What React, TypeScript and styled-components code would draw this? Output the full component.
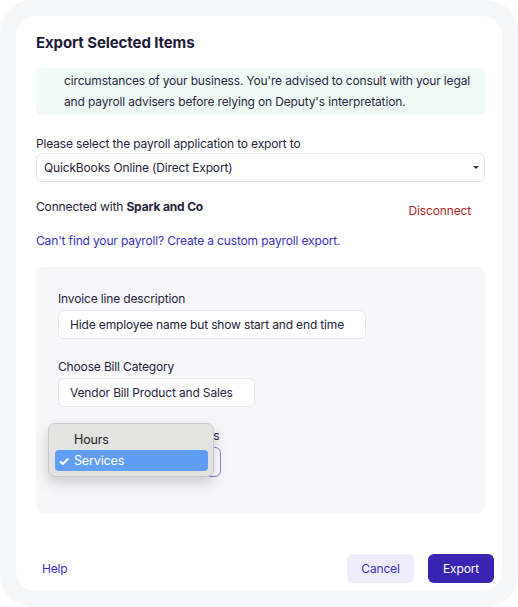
import React from "react";
import styled, { createGlobalStyle } from "styled-components";

const Global = createGlobalStyle`
  html, body { margin: 0; padding: 0; background: #ffffff; }
  body { font-family: Inter, "Noto Sans", sans-serif; letter-spacing: -0.15px; -webkit-font-smoothing: antialiased; }
  * { box-sizing: border-box; }
`;

const Frame = styled.div`
  width: 518px;
  height: 607px;
  background: #f6f7f9;
  border-radius: 32px;
  padding: 16px;
`;

const Card = styled.div`
  height: 575px;
  background: #ffffff;
  border-radius: 20px;
  display: flex;
  flex-direction: column;
  padding: 15px 17px 0 20px;
  color: #26233a;
`;

const Title = styled.h2`
  margin: 0;
  font-size: 15px;
  line-height: 24px;
  font-weight: 700;
  letter-spacing: -0.1px;
  color: #1e1a38;
`;

const Notice = styled.div`
  margin-top: 13px;
  background: #f0faf7;
  border-radius: 6px;
  padding: 2px 10px 3px 28px;
  font-size: 12px;
  line-height: 21px;
  color: #2a2740;
`;

const FieldLabel = styled.div<{ $top?: number }>`
  margin-top: ${(p) => p.$top ?? 0}px;
  font-size: 12px;
  line-height: 18px;
  color: #26233a;
  white-space: nowrap;
`;

const Select = styled.div`
  height: 29px;
  border: 1px solid #e4e4ea;
  border-radius: 6px;
  display: flex;
  align-items: center;
  justify-content: space-between;
  padding: 0 5px 0 7px;
  font-size: 12px;
  color: #26233a;
`;

const Caret = styled.span`
  width: 0;
  height: 0;
  border-left: 3px solid transparent;
  border-right: 3px solid transparent;
  border-top: 3px solid #333;
`;

const ConnectedRow = styled.div`
  margin-top: 16px;
  display: flex;
  justify-content: space-between;
  align-items: flex-start;
  font-size: 12px;
  line-height: 18px;
`;

const Disconnect = styled.span`
  color: #b1271d;
  padding: 4px 14px 0 0;
`;

const LinkText = styled.div`
  margin-top: 12px;
  font-size: 12px;
  line-height: 18px;
  color: #3a2fbf;
`;

const Panel = styled.div`
  margin-top: 17px;
  height: 246px;
  background: #f7f7fa;
  border-radius: 8px;
  padding: 23px 22px 0 22px;
  display: flex;
  flex-direction: column;
`;

const Group = styled.div<{ $top?: number }>`
  position: relative;
  margin-top: ${(p) => p.$top ?? 0}px;
  display: flex;
  flex-direction: column;
  gap: 2px;
`;

const TextBox = styled.div<{ $w: number; $focus?: boolean; $h?: number }>`
  width: ${(p) => p.$w}px;
  height: ${(p) => p.$h ?? 29}px;
  background: #ffffff;
  border: 1px solid ${(p) => (p.$focus ? "#8b7fe0" : "#e6e6ee")};
  border-radius: 6px;
  display: flex;
  align-items: center;
  padding-left: 11px;
  font-size: 12px;
  white-space: nowrap;
  color: #26233a;
`;

const Menu = styled.div`
  position: absolute;
  left: -10px;
  top: -4px;
  width: 166px;
  padding: 5px 5px 5px 6px;
  background: #e3e3e2;
  border: 1px solid #c9c9c9;
  border-radius: 7px;
  box-shadow: 0 6px 14px rgba(0, 0, 0, 0.18);
  display: flex;
  flex-direction: column;
`;

const MenuItem = styled.div<{ $selected?: boolean }>`
  height: 21px;
  display: flex;
  align-items: center;
  border-radius: 4px;
  font-size: 12.5px;
  padding-left: 3px;
  background: ${(p) => (p.$selected ? "#609ef6" : "transparent")};
  color: ${(p) => (p.$selected ? "#ffffff" : "#222")};
`;

const Check = styled.span`
  width: 16px;
  font-size: 13px;
  font-weight: 700;
`;

const Spacer = styled.div`
  flex: 1;
`;

const Footer = styled.div`
  display: flex;
  align-items: center;
  margin: 0 -9px 8px 6px;
  gap: 14px;
`;

const HelpLink = styled.span`
  font-size: 12px;
  color: #3a2fbf;
  margin-right: auto;
`;

const Button = styled.button<{ $primary?: boolean }>`
  height: 29px;
  border: none;
  border-radius: 6px;
  font-family: inherit;
  letter-spacing: -0.15px;
  font-size: 12px;
  padding: 0;
  width: ${(p) => (p.$primary ? 66 : 67)}px;
  background: ${(p) => (p.$primary ? "#3a25b3" : "#efedfa")};
  color: ${(p) => (p.$primary ? "#ffffff" : "#3a2fbf")};
`;

export default function App() {
  return (
    <>
      <Global />
      <Frame>
        <Card>
          <Title>Export Selected Items</Title>
          <Notice>
            circumstances of your business. You're advised to consult with your legal
            <br />
            and payroll advisers before relying on Deputy's interpretation.
          </Notice>
          <FieldLabel $top={20}>Please select the payroll application to export to</FieldLabel>
          <Select>
            <span>QuickBooks Online (Direct Export)</span>
            <Caret />
          </Select>
          <ConnectedRow>
            <span>
              Connected with <b>Spark and Co</b>
            </span>
            <Disconnect>Disconnect</Disconnect>
          </ConnectedRow>
          <LinkText>Can't find your payroll? Create a custom payroll export.</LinkText>
          <Panel>
            <Group>
              <FieldLabel>Invoice line description</FieldLabel>
              <TextBox $w={308}>Hide employee name but show start and end time</TextBox>
            </Group>
            <Group $top={19}>
              <FieldLabel>Choose Bill Category</FieldLabel>
              <TextBox $w={197}>Vendor Bill Product and Sales</TextBox>
            </Group>
            <Group $top={20}>
              <FieldLabel>Choose Shift Line Item Types</FieldLabel>
              <TextBox $w={163} $h={30} $focus>
                Services
              </TextBox>
              <Menu>
                <MenuItem>
                  <Check />
                  Hours
                </MenuItem>
                <MenuItem $selected>
                  <Check>✓</Check>
                  Services
                </MenuItem>
              </Menu>
            </Group>
          </Panel>
          <Spacer />
          <Footer>
            <HelpLink>Help</HelpLink>
            <Button>Cancel</Button>
            <Button $primary>Export</Button>
          </Footer>
        </Card>
      </Frame>
    </>
  );
}
